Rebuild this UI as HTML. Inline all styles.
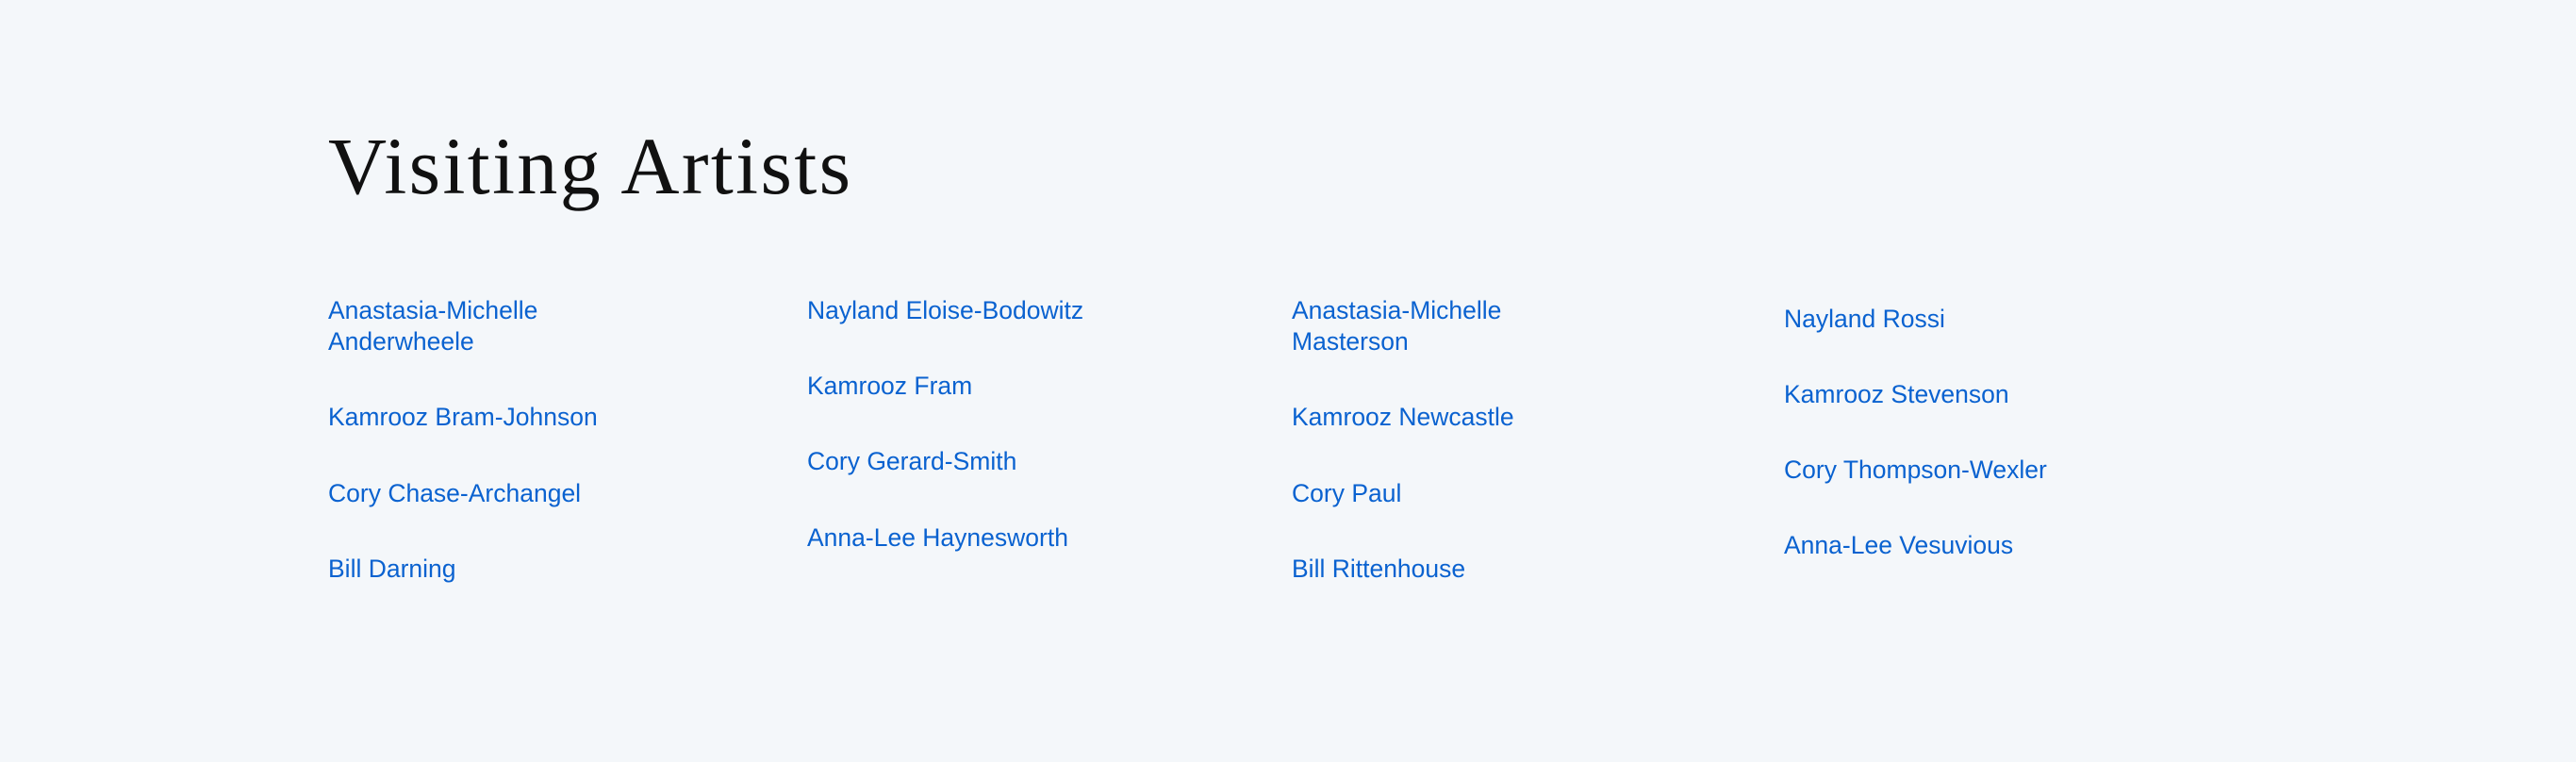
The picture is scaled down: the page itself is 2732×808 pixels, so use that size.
<!DOCTYPE html>
<html><head><style>
html,body{margin:0;padding:0;}
body{width:2732px;height:808px;background:#f4f7fa;position:relative;overflow:hidden;}
h1{position:absolute;left:348px;top:126px;margin:0;font-family:"Liberation Serif",serif;font-weight:normal;font-size:86px;line-height:100px;color:#111;letter-spacing:2.4px;}
.a{position:absolute;font-family:"Liberation Sans",sans-serif;font-size:26.5px;line-height:33px;color:#0a62d0;white-space:nowrap;letter-spacing:0px;}
</style></head><body>
<h1>Visiting Artists</h1>
<div class="a" style="left:348px;top:313px">Anastasia-Michelle<br>Anderwheele</div>
<div class="a" style="left:348px;top:426px">Kamrooz Bram-Johnson</div>
<div class="a" style="left:348px;top:507px">Cory Chase-Archangel</div>
<div class="a" style="left:348px;top:587px">Bill Darning</div>

<div class="a" style="left:856px;top:313px">Nayland Eloise-Bodowitz</div>
<div class="a" style="left:856px;top:393px">Kamrooz Fram</div>
<div class="a" style="left:856px;top:473px">Cory Gerard-Smith</div>
<div class="a" style="left:856px;top:554px">Anna-Lee Haynesworth</div>

<div class="a" style="left:1370px;top:313px">Anastasia-Michelle<br>Masterson</div>
<div class="a" style="left:1370px;top:426px">Kamrooz Newcastle</div>
<div class="a" style="left:1370px;top:507px">Cory Paul</div>
<div class="a" style="left:1370px;top:587px">Bill Rittenhouse</div>

<div class="a" style="left:1892px;top:322px">Nayland Rossi</div>
<div class="a" style="left:1892px;top:402px">Kamrooz Stevenson</div>
<div class="a" style="left:1892px;top:482px">Cory Thompson-Wexler</div>
<div class="a" style="left:1892px;top:562px">Anna-Lee Vesuvious</div>
</body></html>
